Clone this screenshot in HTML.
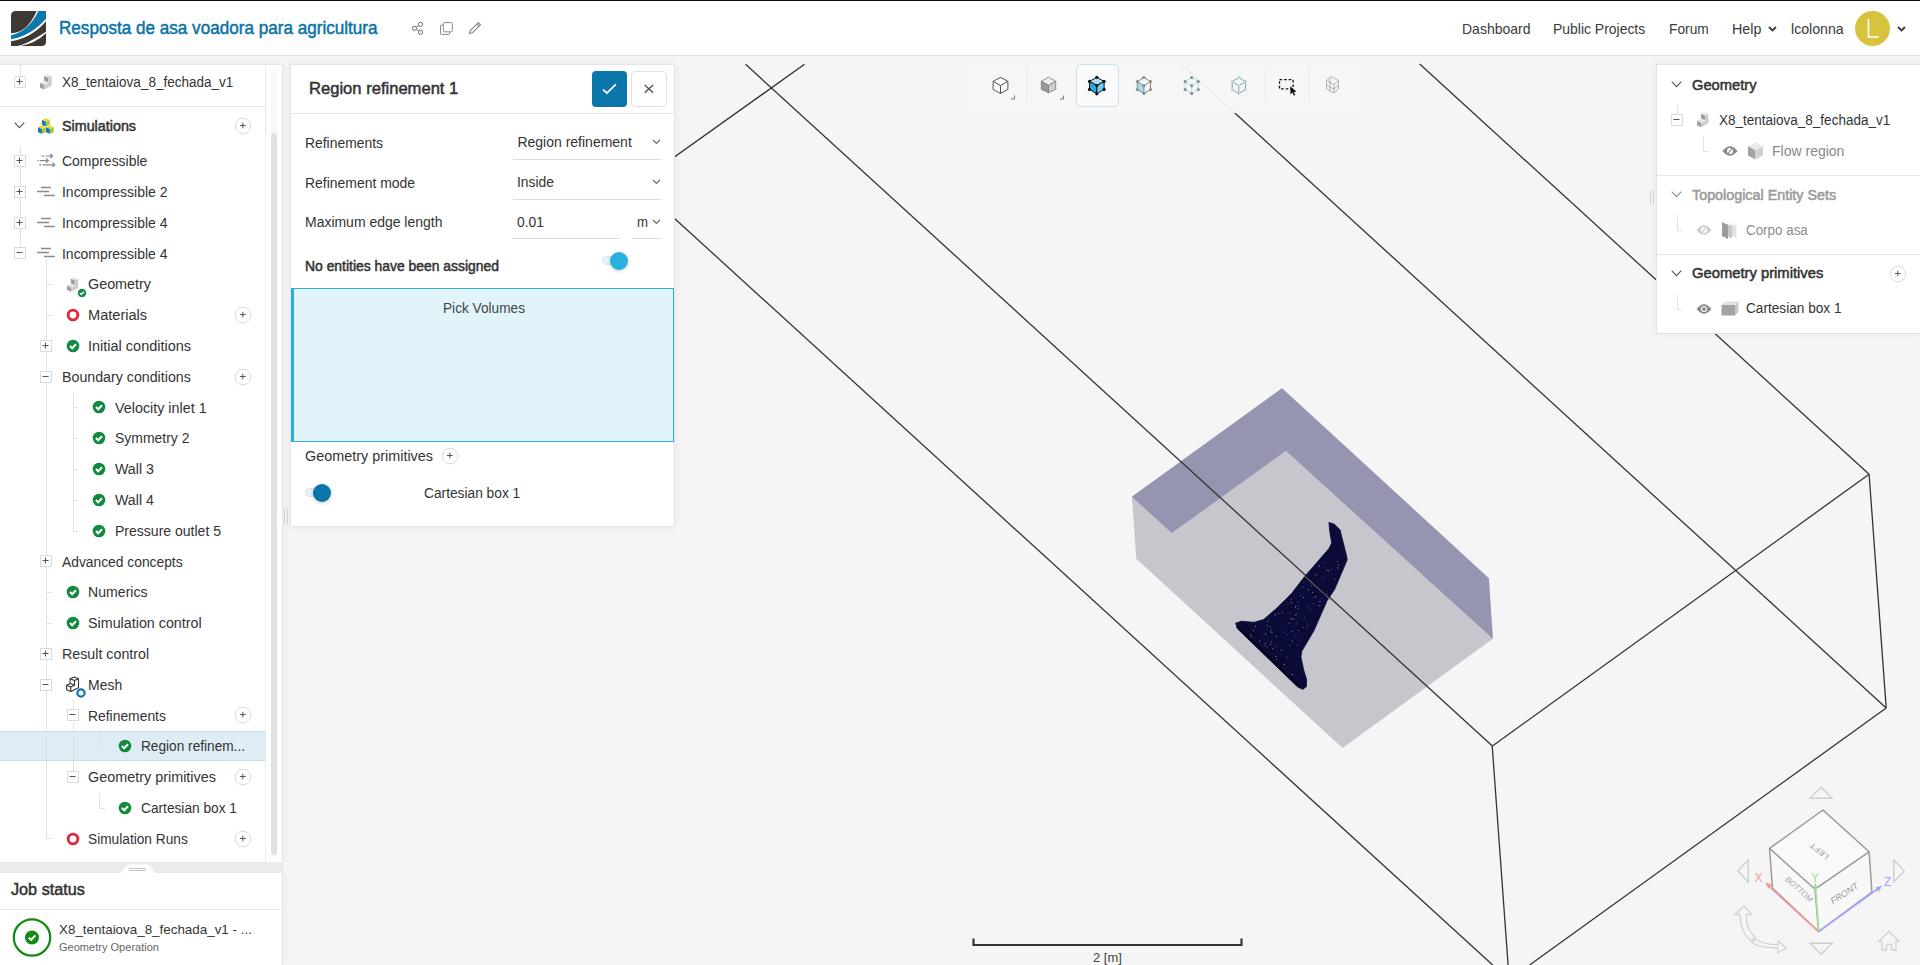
<!DOCTYPE html><html><head><meta charset="utf-8"><style>
html,body{margin:0;padding:0;width:1920px;height:965px;overflow:hidden;background:#f5f5f5;font-family:"Liberation Sans",sans-serif;}
.t{position:absolute;line-height:1;white-space:nowrap;}
svg{position:absolute;overflow:visible;}
</style></head><body>
<div style="position:absolute;left:0px;top:0px;width:1920px;height:1px;background:#0d0d0d"></div>
<div style="position:absolute;left:0px;top:1px;width:1920px;height:54px;background:linear-gradient(#fff 0,#fff 70%,#fcfcfc 100%)"></div>
<div style="position:absolute;left:0px;top:55px;width:1920px;height:1px;background:#e2e2e2"></div>
<svg style="left:11px;top:11px;" width="35" height="35" viewBox="0 0 35 35"><defs><clipPath id="lc"><path d="M5 0H35V30.5Q35 35 30.5 35H0V5Q0 0 5 0Z"/></clipPath></defs>
<g clip-path="url(#lc)"><rect width="35" height="35" fill="#3e3935"/>
<path fill="#fff" d="M25.7 0H35V10.2Q21 26.8 0 30.2V22.2Q15.85 22.4 25.7 0Z"/>
<path fill="#0a78ad" d="M27.4 0H35V7.83Q19.9 24.9 0 28.3V24.15Q17.3 20.9 27.4 0Z"/>
<path fill="#fff" d="M35 20.67Q16 33.2 6 35H9.6Q24 32.6 35 22.3Z"/></g></svg>
<div class="t" style="left:59.0px;top:17.72px;font-size:19px;color:#0a73a6;font-weight:normal;transform:scaleX(0.9002);transform-origin:0 0;-webkit-text-stroke:0.5px #0a73a6;">Resposta de asa voadora para agricultura</div>
<svg style="left:410px;top:20px;" width="16" height="16" viewBox="0 0 16 16"><g fill="none" stroke="#6a6a6a" stroke-width="1"><circle cx="4.5" cy="8.3" r="2.1"/><circle cx="10.5" cy="4.4" r="2.1"/><circle cx="10.5" cy="12.3" r="2.1"/><path d="M6.3 7.2L8.7 5.5M6.3 9.4L8.7 11.2"/></g></svg>
<svg style="left:438px;top:20px;" width="16" height="16" viewBox="0 0 16 16"><g fill="none" stroke="#8a8a8a" stroke-width="1"><path d="M5 5H3.3Q2.5 5 2.5 5.8V13.6Q2.5 14.4 3.3 14.4H10.8Q11.6 14.4 11.6 13.6V12"/><rect x="5.3" y="2.6" width="9" height="9.2" rx="0.9" fill="#fff" stroke="#8a8a8a"/></g></svg>
<svg style="left:467px;top:20px;" width="16" height="16" viewBox="0 0 16 16"><g fill="none" stroke="#8a8a8a" stroke-width="1.1"><path d="M2.5 13.5L3.3 10.5L11.3 2.5L13.5 4.7L5.5 12.7Z M10 4L12 6"/></g></svg>
<div class="t" style="left:1462.2px;top:21.71px;font-size:14.4px;color:#3a3a3a;font-weight:normal;transform:scaleX(0.9730);transform-origin:0 0;">Dashboard</div>
<div class="t" style="left:1553.3px;top:21.71px;font-size:14.4px;color:#3a3a3a;font-weight:normal;transform:scaleX(0.9687);transform-origin:0 0;">Public Projects</div>
<div class="t" style="left:1668.7px;top:21.71px;font-size:14.4px;color:#3a3a3a;font-weight:normal;transform:scaleX(0.9573);transform-origin:0 0;">Forum</div>
<div class="t" style="left:1731.7px;top:21.71px;font-size:14.4px;color:#3a3a3a;font-weight:normal;transform:scaleX(0.9934);transform-origin:0 0;">Help</div>
<svg style="left:1766.5px;top:24.5px;" width="11" height="8" viewBox="0 0 11 8"><path d="M2 2L5.5 5.5L9 2" stroke="#3a3a3a" stroke-width="1.8" fill="none"/></svg>
<div class="t" style="left:1791.0px;top:21.71px;font-size:14.4px;color:#3a3a3a;font-weight:normal;transform:scaleX(0.9831);transform-origin:0 0;">lcolonna</div>
<div style="position:absolute;left:1855px;top:11px;width:35px;height:35px;background:#d8c33f;border-radius:50%"></div>
<svg style="left:1855px;top:11px;" width="35" height="35" viewBox="0 0 35 35"><path d="M13.5 8V26H23.5" stroke="#fff" stroke-width="1.6" fill="none"/></svg>
<svg style="left:1896px;top:24.5px;" width="11" height="8" viewBox="0 0 11 8"><path d="M2 2L5.5 5.5L9 2" stroke="#3a3a3a" stroke-width="1.8" fill="none"/></svg>
<svg style="left:0;top:0" width="1920" height="965" viewBox="0 0 1920 965"><polygon points="1282,388.2 1488.8,578.2 1492.9,638.8 1342.5,747.9 1136.3,558.8 1131.9,496.8" fill="#c7c6cd"/><polygon points="1282,388.2 1488.8,578.2 1492.9,638.8 1285.9,450.8 1171.7,533.1 1131.9,496.8" fill="#9595b1"/><line x1="745.6" y1="64.3" x2="1492.4" y2="746" stroke="#333" stroke-width="1.3"/><line x1="804.5" y1="64.3" x2="560" y2="238.5" stroke="#333" stroke-width="1.3"/><line x1="674" y1="217.9" x2="1492.7" y2="965" stroke="#333" stroke-width="1.3"/><line x1="1235.4" y1="113.4" x2="1886.2" y2="708" stroke="#333" stroke-width="1.3"/><line x1="1419.7" y1="64" x2="1869.1" y2="474.2" stroke="#333" stroke-width="1.3"/><line x1="1492.4" y1="746" x2="1869.1" y2="474.2" stroke="#333" stroke-width="1.3"/><line x1="1869.1" y1="474.2" x2="1886.2" y2="708" stroke="#333" stroke-width="1.3"/><line x1="1886.2" y1="708" x2="1529.6" y2="965" stroke="#333" stroke-width="1.3"/><line x1="1492.2" y1="745.8" x2="1508.1" y2="965" stroke="#333" stroke-width="1.3"/><line x1="1181" y1="64" x2="1235.4" y2="113.4" stroke="#333" stroke-width="1.3"/><polygon points="1328.9,522.5 1334.5,524.3 1340.1,529.9 1341.9,537.4 1346.6,556 1347.2,559.8 1334.5,589.6 1327,600.8 1313.9,630.7 1301.8,651.2 1300.9,656.8 1303.7,669.9 1306.5,679.2 1306.5,686.6 1302.8,689.4 1297.2,686.6 1237.5,628.8 1235.6,623.2 1241.2,621.3 1254.3,622.3 1263.6,619.5 1276.6,608.3 1291.6,593.4 1304.6,576.6 1317.7,561.6 1328.9,548.6 1331.7,543 1329.8,531.8" fill="#0b0b38" stroke="#0b0b38" stroke-width="0.8" stroke-linejoin="round"/><circle cx="1287.5" cy="657.3" r="0.55" fill="#d8d8ee" opacity="0.46"/><circle cx="1267.3" cy="625.4" r="0.55" fill="#d8d8ee" opacity="0.54"/><circle cx="1303.2" cy="627.2" r="0.55" fill="#d8d8ee" opacity="0.63"/><circle cx="1282.2" cy="612.6" r="0.55" fill="#d8d8ee" opacity="0.65"/><circle cx="1265.6" cy="633.9" r="0.55" fill="#d8d8ee" opacity="0.69"/><circle cx="1303.6" cy="597.5" r="0.55" fill="#d8d8ee" opacity="0.73"/><circle cx="1276.4" cy="636.2" r="0.55" fill="#d8d8ee" opacity="0.65"/><circle cx="1304.4" cy="617.8" r="0.55" fill="#d8d8ee" opacity="0.40"/><circle cx="1292.4" cy="631.3" r="0.55" fill="#d8d8ee" opacity="0.73"/><circle cx="1251.1" cy="637.2" r="0.55" fill="#d8d8ee" opacity="0.48"/><circle cx="1327.2" cy="570.5" r="0.55" fill="#d8d8ee" opacity="0.61"/><circle cx="1283.6" cy="632.0" r="0.55" fill="#d8d8ee" opacity="0.52"/><circle cx="1284.1" cy="664.4" r="0.55" fill="#d8d8ee" opacity="0.68"/><circle cx="1289.9" cy="612.9" r="0.55" fill="#d8d8ee" opacity="0.44"/><circle cx="1331.4" cy="569.5" r="0.55" fill="#d8d8ee" opacity="0.46"/><circle cx="1293.5" cy="619.3" r="0.55" fill="#d8d8ee" opacity="0.46"/><circle cx="1296.5" cy="623.8" r="0.55" fill="#d8d8ee" opacity="0.42"/><circle cx="1255.4" cy="626.5" r="0.55" fill="#d8d8ee" opacity="0.75"/><circle cx="1291.6" cy="602.4" r="0.55" fill="#d8d8ee" opacity="0.61"/><circle cx="1322.9" cy="577.7" r="0.55" fill="#d8d8ee" opacity="0.50"/><circle cx="1253.5" cy="630.7" r="0.55" fill="#d8d8ee" opacity="0.53"/><circle cx="1320.0" cy="601.5" r="0.55" fill="#d8d8ee" opacity="0.80"/><circle cx="1310.7" cy="581.1" r="0.55" fill="#d8d8ee" opacity="0.58"/><circle cx="1310.0" cy="609.3" r="0.55" fill="#d8d8ee" opacity="0.45"/><circle cx="1290.8" cy="618.3" r="0.55" fill="#d8d8ee" opacity="0.71"/><circle cx="1298.2" cy="608.8" r="0.55" fill="#d8d8ee" opacity="0.64"/><circle cx="1292.3" cy="641.0" r="0.55" fill="#d8d8ee" opacity="0.80"/><circle cx="1296.8" cy="613.9" r="0.55" fill="#d8d8ee" opacity="0.40"/><circle cx="1272.7" cy="648.6" r="0.55" fill="#d8d8ee" opacity="0.56"/><circle cx="1295.8" cy="614.9" r="0.55" fill="#d8d8ee" opacity="0.72"/><circle cx="1289.3" cy="623.0" r="0.55" fill="#d8d8ee" opacity="0.73"/><circle cx="1295.6" cy="606.9" r="0.55" fill="#d8d8ee" opacity="0.76"/><circle cx="1314.3" cy="597.4" r="0.55" fill="#d8d8ee" opacity="0.37"/><circle cx="1298.3" cy="601.5" r="0.55" fill="#d8d8ee" opacity="0.48"/><circle cx="1300.4" cy="595.5" r="0.55" fill="#d8d8ee" opacity="0.40"/><circle cx="1307.4" cy="607.0" r="0.55" fill="#d8d8ee" opacity="0.44"/><circle cx="1250.8" cy="635.1" r="0.55" fill="#d8d8ee" opacity="0.79"/><circle cx="1278.9" cy="613.5" r="0.55" fill="#d8d8ee" opacity="0.61"/><circle cx="1337.7" cy="567.9" r="0.55" fill="#d8d8ee" opacity="0.77"/><circle cx="1275.5" cy="646.5" r="0.55" fill="#d8d8ee" opacity="0.52"/><circle cx="1292.5" cy="674.5" r="0.55" fill="#d8d8ee" opacity="0.74"/><circle cx="1326.9" cy="594.1" r="0.55" fill="#d8d8ee" opacity="0.55"/><circle cx="1295.7" cy="635.0" r="0.55" fill="#d8d8ee" opacity="0.47"/><circle cx="1308.6" cy="589.8" r="0.55" fill="#d8d8ee" opacity="0.70"/><circle cx="1319.1" cy="565.9" r="0.55" fill="#d8d8ee" opacity="0.78"/><circle cx="1268.3" cy="618.7" r="0.55" fill="#d8d8ee" opacity="0.40"/><circle cx="1297.9" cy="645.1" r="0.55" fill="#d8d8ee" opacity="0.62"/><circle cx="1259.9" cy="640.9" r="0.55" fill="#d8d8ee" opacity="0.63"/><circle cx="1297.4" cy="605.7" r="0.55" fill="#d8d8ee" opacity="0.45"/><circle cx="1307.8" cy="625.2" r="0.55" fill="#d8d8ee" opacity="0.52"/><circle cx="1313.1" cy="603.3" r="0.55" fill="#d8d8ee" opacity="0.41"/><circle cx="1319.8" cy="605.5" r="0.55" fill="#d8d8ee" opacity="0.44"/><circle cx="1298.5" cy="630.5" r="0.55" fill="#d8d8ee" opacity="0.46"/><circle cx="1271.6" cy="641.7" r="0.55" fill="#d8d8ee" opacity="0.62"/><circle cx="1265.5" cy="643.4" r="0.55" fill="#d8d8ee" opacity="0.64"/><circle cx="1306.7" cy="627.8" r="0.55" fill="#d8d8ee" opacity="0.44"/><circle cx="1270.4" cy="643.9" r="0.55" fill="#d8d8ee" opacity="0.36"/><circle cx="1275.4" cy="615.8" r="0.55" fill="#d8d8ee" opacity="0.50"/><circle cx="1271.9" cy="632.5" r="0.55" fill="#d8d8ee" opacity="0.66"/><circle cx="1291.5" cy="599.6" r="0.55" fill="#d8d8ee" opacity="0.43"/><circle cx="1276.6" cy="659.4" r="0.55" fill="#d8d8ee" opacity="0.49"/><circle cx="1303.9" cy="582.7" r="0.55" fill="#d8d8ee" opacity="0.44"/><circle cx="1328.5" cy="570.7" r="0.55" fill="#d8d8ee" opacity="0.71"/><circle cx="1338.6" cy="564.9" r="0.55" fill="#d8d8ee" opacity="0.60"/><circle cx="1299.9" cy="640.1" r="0.55" fill="#d8d8ee" opacity="0.38"/><circle cx="1290.1" cy="645.4" r="0.55" fill="#d8d8ee" opacity="0.40"/><circle cx="1271.0" cy="630.0" r="0.55" fill="#d8d8ee" opacity="0.53"/><circle cx="1275.1" cy="614.2" r="0.55" fill="#d8d8ee" opacity="0.60"/><circle cx="1292.3" cy="618.9" r="0.55" fill="#d8d8ee" opacity="0.64"/><circle cx="1321.5" cy="598.2" r="0.55" fill="#d8d8ee" opacity="0.39"/><circle cx="1323.2" cy="562.2" r="0.55" fill="#d8d8ee" opacity="0.42"/><circle cx="1270.2" cy="626.8" r="0.55" fill="#d8d8ee" opacity="0.66"/><circle cx="1303.3" cy="587.1" r="0.55" fill="#d8d8ee" opacity="0.53"/><circle cx="1267.4" cy="621.2" r="0.55" fill="#d8d8ee" opacity="0.48"/><circle cx="1315.5" cy="574.2" r="0.55" fill="#d8d8ee" opacity="0.49"/><circle cx="1312.4" cy="592.2" r="0.55" fill="#d8d8ee" opacity="0.78"/><circle cx="1270.7" cy="631.8" r="0.55" fill="#d8d8ee" opacity="0.49"/><circle cx="1337.5" cy="561.3" r="0.55" fill="#d8d8ee" opacity="0.60"/><circle cx="1287.1" cy="634.2" r="0.55" fill="#d8d8ee" opacity="0.51"/><circle cx="1318.9" cy="605.8" r="0.55" fill="#d8d8ee" opacity="0.54"/><circle cx="1276.2" cy="656.2" r="0.55" fill="#d8d8ee" opacity="0.74"/><circle cx="1267.1" cy="646.7" r="0.55" fill="#d8d8ee" opacity="0.80"/><circle cx="1311.4" cy="585.6" r="0.55" fill="#d8d8ee" opacity="0.51"/><circle cx="1270.7" cy="644.6" r="0.55" fill="#d8d8ee" opacity="0.44"/><circle cx="1334.9" cy="579.3" r="0.55" fill="#d8d8ee" opacity="0.68"/><circle cx="1316.7" cy="575.6" r="0.55" fill="#d8d8ee" opacity="0.44"/><circle cx="1288.0" cy="604.0" r="0.55" fill="#d8d8ee" opacity="0.35"/><circle cx="1281.2" cy="650.2" r="0.55" fill="#d8d8ee" opacity="0.76"/><circle cx="1264.7" cy="645.5" r="0.55" fill="#d8d8ee" opacity="0.54"/><circle cx="1316.0" cy="596.5" r="0.55" fill="#d8d8ee" opacity="0.72"/><path d="M1237 626.5L1300 687" stroke="#000010" stroke-width="2" opacity="0.85"/><path d="M1243 623.5L1304 680" stroke="#000010" stroke-width="1" opacity="0.6"/><line x1="1304" y1="575.6" x2="1331" y2="600.2" stroke="#8a8a70" stroke-width="1.1" opacity="0.7"/></svg>
<div style="position:absolute;left:0px;top:64px;width:283px;height:798px;background:#fff;border-top:1px solid #e6e6e6;border-right:1px solid #e4e4e4;box-sizing:border-box;box-shadow:0 0 9px rgba(0,0,0,0.06)"></div>
<div style="position:absolute;left:265px;top:65px;width:1px;height:797px;background:#e8ecef"></div>
<div style="position:absolute;left:271px;top:70px;width:6px;height:787px;background:#f7f8f9;border-radius:3px"></div>
<div style="position:absolute;left:271px;top:133px;width:6px;height:722px;background:#dde1e5;border-radius:3px"></div>
<div style="position:absolute;left:20px;top:65px;width:1px;height:11px;background:#e2e2e2"></div>
<svg style="left:14px;top:76px;" width="12" height="12" viewBox="0 0 12 12"><rect x="0.5" y="0.5" width="11" height="11" fill="#fff" stroke="#dadada"/><path d="M2.5 5.5H8.5" stroke="#555" stroke-width="1"/><path d="M5.5 2.5V8.5" stroke="#555" stroke-width="1"/></svg>
<svg style="left:40px;top:74px;transform:scale(1.0);transform-origin:0 0;" width="13" height="16" viewBox="0 0 13 16"><polygon points="4.1,1.9 7.6,0.3 11.75,2.1 8.2,3.8" fill="#e6e6e6"/>
<polygon points="4.1,1.9 8.2,3.8 8.2,8.6 4.1,6.7" fill="#9c9c9c"/>
<polygon points="8.2,3.8 11.75,2.1 11.75,11.5 4.3,15.6 4.3,11 8.2,9.2" fill="#cdcdcd"/>
<polygon points="0,9 3.5,7.4 8.2,9.2 4.3,11" fill="#e3e3e3"/>
<polygon points="0,9 4.3,11 4.3,15.6 0,13.75" fill="#a0a0a0"/></svg>
<div class="t" style="left:62.0px;top:75.05px;font-size:14px;color:#333;font-weight:normal;transform:scaleX(0.9652);transform-origin:0 0;">X8_tentaiova_8_fechada_v1</div>
<div style="position:absolute;left:0px;top:106px;width:265px;height:1px;background:#e8e8e8"></div>
<svg style="left:14px;top:122px;" width="11" height="7" viewBox="0 0 11 7"><path d="M0.7 0.7L5.5 5.6L10.3 0.7" stroke="#555" stroke-width="1.1" fill="none"/></svg>
<svg style="left:37px;top:117px;" width="18" height="18" viewBox="0 0 18 18"><polygon points="8.8,1.0 12.7,3.0 8.9,4.8 5.0,3.0" fill="#e6dc2e"/><polygon points="5.0,3.0 8.9,4.8 8.9,9.6 5.0,8.0" fill="#1277b8"/><polygon points="8.9,4.8 12.7,3.0 12.7,8.0 8.9,9.6" fill="#a8c43a"/><polygon points="4.8,8.2 8.7,10.2 4.9,12.0 1.0,10.2" fill="#e6dc2e"/><polygon points="1.0,10.2 4.9,12.0 4.9,16.8 1.0,15.2" fill="#1277b8"/><polygon points="4.9,12.0 8.7,10.2 8.7,15.2 4.9,16.8" fill="#a8c43a"/><polygon points="12.8,8.2 16.7,10.2 12.9,12.0 9.0,10.2" fill="#e6dc2e"/><polygon points="9.0,10.2 12.9,12.0 12.9,16.8 9.0,15.2" fill="#1277b8"/><polygon points="12.9,12.0 16.7,10.2 16.7,15.2 12.9,16.8" fill="#a8c43a"/></svg>
<div class="t" style="left:62.0px;top:119.05px;font-size:14px;color:#333;font-weight:normal;transform:scaleX(1.0226);transform-origin:0 0;-webkit-text-stroke:0.5px #333;">Simulations</div>
<svg style="left:234px;top:117px;" width="18" height="18" viewBox="0 0 18 18"><circle cx="9" cy="9" r="7.8" fill="#fff" stroke="#d5dbe1"/><path d="M6 8.5H11.6M8.8 5.7V11.3" stroke="#555" stroke-width="1"/></svg>
<div style="position:absolute;left:20px;top:146px;width:1px;height:107px;background:#e2e2e2"></div>
<div style="position:absolute;left:0px;top:731px;width:265px;height:30px;background:#deedf5;border-top:1px solid #c6dfeb;border-bottom:1px solid #c6dfeb;box-sizing:border-box"></div>
<div class="t" style="left:62.0px;top:154.25px;font-size:14px;color:#333;font-weight:normal;transform:scaleX(0.9967);transform-origin:0 0;">Compressible</div>
<div class="t" style="left:62.0px;top:185.05px;font-size:14px;color:#333;font-weight:normal;transform:scaleX(0.9960);transform-origin:0 0;">Incompressible 2</div>
<div class="t" style="left:62.0px;top:215.85px;font-size:14px;color:#333;font-weight:normal;transform:scaleX(0.9960);transform-origin:0 0;">Incompressible 4</div>
<div class="t" style="left:62.0px;top:246.65px;font-size:14px;color:#333;font-weight:normal;transform:scaleX(0.9960);transform-origin:0 0;">Incompressible 4</div>
<div class="t" style="left:88.2px;top:277.45px;font-size:14px;color:#333;font-weight:normal;transform:scaleX(1.0250);transform-origin:0 0;">Geometry</div>
<div class="t" style="left:88.2px;top:308.25px;font-size:14px;color:#333;font-weight:normal;transform:scaleX(1.0406);transform-origin:0 0;">Materials</div>
<div class="t" style="left:88.2px;top:339.05px;font-size:14px;color:#333;font-weight:normal;transform:scaleX(1.0350);transform-origin:0 0;">Initial conditions</div>
<div class="t" style="left:62.0px;top:369.85px;font-size:14px;color:#333;font-weight:normal;transform:scaleX(1.0153);transform-origin:0 0;">Boundary conditions</div>
<div class="t" style="left:114.8px;top:400.65px;font-size:14px;color:#333;font-weight:normal;transform:scaleX(1.0235);transform-origin:0 0;">Velocity inlet 1</div>
<div class="t" style="left:114.8px;top:431.45px;font-size:14px;color:#333;font-weight:normal;transform:scaleX(0.9963);transform-origin:0 0;">Symmetry 2</div>
<div class="t" style="left:114.8px;top:462.25px;font-size:14px;color:#333;font-weight:normal;transform:scaleX(1.0136);transform-origin:0 0;">Wall 3</div>
<div class="t" style="left:114.8px;top:493.05px;font-size:14px;color:#333;font-weight:normal;transform:scaleX(1.0136);transform-origin:0 0;">Wall 4</div>
<div class="t" style="left:114.8px;top:523.85px;font-size:14px;color:#333;font-weight:normal;transform:scaleX(1.0016);transform-origin:0 0;">Pressure outlet 5</div>
<div class="t" style="left:62.0px;top:554.65px;font-size:14px;color:#333;font-weight:normal;transform:scaleX(0.9870);transform-origin:0 0;">Advanced concepts</div>
<div class="t" style="left:88.2px;top:585.45px;font-size:14px;color:#333;font-weight:normal;transform:scaleX(1.0082);transform-origin:0 0;">Numerics</div>
<div class="t" style="left:88.2px;top:616.25px;font-size:14px;color:#333;font-weight:normal;transform:scaleX(1.0218);transform-origin:0 0;">Simulation control</div>
<div class="t" style="left:62.0px;top:647.05px;font-size:14px;color:#333;font-weight:normal;transform:scaleX(1.0176);transform-origin:0 0;">Result control</div>
<div class="t" style="left:88.2px;top:677.85px;font-size:14px;color:#333;font-weight:normal;transform:scaleX(0.9990);transform-origin:0 0;">Mesh</div>
<div class="t" style="left:88.4px;top:708.65px;font-size:14px;color:#333;font-weight:normal;transform:scaleX(0.9912);transform-origin:0 0;">Refinements</div>
<div class="t" style="left:141.4px;top:739.45px;font-size:14px;color:#333;font-weight:normal;transform:scaleX(0.9756);transform-origin:0 0;">Region refinem...</div>
<div class="t" style="left:88.4px;top:770.25px;font-size:14px;color:#333;font-weight:normal;transform:scaleX(1.0276);transform-origin:0 0;">Geometry primitives</div>
<div class="t" style="left:141.4px;top:801.05px;font-size:14px;color:#333;font-weight:normal;transform:scaleX(0.9790);transform-origin:0 0;">Cartesian box 1</div>
<div class="t" style="left:88.4px;top:831.85px;font-size:14px;color:#333;font-weight:normal;transform:scaleX(0.9790);transform-origin:0 0;">Simulation Runs</div>
<svg style="left:14px;top:155px;" width="12" height="12" viewBox="0 0 12 12"><rect x="0.5" y="0.5" width="11" height="11" fill="#fff" stroke="#dadada"/><path d="M2.5 5.5H8.5" stroke="#555" stroke-width="1"/><path d="M5.5 2.5V8.5" stroke="#555" stroke-width="1"/></svg>
<svg style="left:14px;top:186px;" width="12" height="12" viewBox="0 0 12 12"><rect x="0.5" y="0.5" width="11" height="11" fill="#fff" stroke="#dadada"/><path d="M2.5 5.5H8.5" stroke="#555" stroke-width="1"/><path d="M5.5 2.5V8.5" stroke="#555" stroke-width="1"/></svg>
<svg style="left:14px;top:217px;" width="12" height="12" viewBox="0 0 12 12"><rect x="0.5" y="0.5" width="11" height="11" fill="#fff" stroke="#dadada"/><path d="M2.5 5.5H8.5" stroke="#555" stroke-width="1"/><path d="M5.5 2.5V8.5" stroke="#555" stroke-width="1"/></svg>
<svg style="left:14px;top:247px;" width="12" height="12" viewBox="0 0 12 12"><rect x="0.5" y="0.5" width="11" height="11" fill="#fff" stroke="#dadada"/><path d="M2.5 5.5H8.5" stroke="#555" stroke-width="1"/></svg>
<svg style="left:37px;top:153px;" width="18" height="16" viewBox="0 0 18 16"><g stroke="#8a8a8a" stroke-width="1.2" fill="none"><path d="M4.5 3H7.5M8.8 3H15M13.2 1L15.6 3L13.2 5"/><path d="M0.2 7.6H1.6M2.8 7.6H10.8M9 5.4L11.3 7.6L9 9.8"/><path d="M2.2 11.8H4.2M5.6 11.8H17.5M15.4 9.6L17.8 11.8L15.4 14"/></g></svg>
<svg style="left:37px;top:184px;" width="18" height="16" viewBox="0 0 18 16"><g stroke="#8a8a8a" stroke-width="1.3" fill="none"><path d="M4 3.5H14M0 7.5H12M7 11.5H17.8"/></g></svg>
<svg style="left:37px;top:215px;" width="18" height="16" viewBox="0 0 18 16"><g stroke="#8a8a8a" stroke-width="1.3" fill="none"><path d="M4 3.5H14M0 7.5H12M7 11.5H17.8"/></g></svg>
<svg style="left:37px;top:245px;" width="18" height="16" viewBox="0 0 18 16"><g stroke="#8a8a8a" stroke-width="1.3" fill="none"><path d="M4 3.5H14M0 7.5H12M7 11.5H17.8"/></g></svg>
<div style="position:absolute;left:46px;top:259px;width:1px;height:580px;background:#e2e2e2"></div>
<div style="position:absolute;left:46px;top:284px;width:6px;height:1px;background:#e2e2e2"></div>
<div style="position:absolute;left:46px;top:315px;width:6px;height:1px;background:#e2e2e2"></div>
<div style="position:absolute;left:46px;top:592px;width:6px;height:1px;background:#e2e2e2"></div>
<div style="position:absolute;left:46px;top:623px;width:6px;height:1px;background:#e2e2e2"></div>
<div style="position:absolute;left:46px;top:838px;width:6px;height:1px;background:#e2e2e2"></div>
<svg style="left:66.5px;top:276.5px;transform:scale(0.95);transform-origin:0 0;" width="13" height="16" viewBox="0 0 13 16"><polygon points="4.1,1.9 7.6,0.3 11.75,2.1 8.2,3.8" fill="#e6e6e6"/>
<polygon points="4.1,1.9 8.2,3.8 8.2,8.6 4.1,6.7" fill="#9c9c9c"/>
<polygon points="8.2,3.8 11.75,2.1 11.75,11.5 4.3,15.6 4.3,11 8.2,9.2" fill="#cdcdcd"/>
<polygon points="0,9 3.5,7.4 8.2,9.2 4.3,11" fill="#e3e3e3"/>
<polygon points="0,9 4.3,11 4.3,15.6 0,13.75" fill="#a0a0a0"/></svg>
<svg style="left:76.5px;top:287.5px;" width="10" height="10" viewBox="0 0 10 10"><circle cx="5" cy="5" r="4.6" fill="#128a3e" stroke="#fff" stroke-width="0.8"/><path d="M2.9 5.1L4.4 6.5L7.1 3.7" stroke="#fff" stroke-width="1.4" fill="none"/></svg>
<svg style="left:66px;top:308.0px;" width="14" height="14" viewBox="0 0 14 14"><circle cx="7" cy="7" r="4.85" fill="none" stroke="#e1283a" stroke-width="2.9"/></svg>
<svg style="left:234px;top:306px;" width="18" height="18" viewBox="0 0 18 18"><circle cx="9" cy="9" r="7.8" fill="#fff" stroke="#d5dbe1"/><path d="M6 8.5H11.6M8.8 5.7V11.3" stroke="#555" stroke-width="1"/></svg>
<svg style="left:40px;top:340px;" width="12" height="12" viewBox="0 0 12 12"><rect x="0.5" y="0.5" width="11" height="11" fill="#fff" stroke="#dadada"/><path d="M2.5 5.5H8.5" stroke="#555" stroke-width="1"/><path d="M5.5 2.5V8.5" stroke="#555" stroke-width="1"/></svg>
<svg style="left:66px;top:338.8px;" width="14" height="14" viewBox="0 0 14 14"><circle cx="7" cy="7" r="6.3" fill="#128a3e"/><path d="M4 7L6.2 9.2L10 5.2" stroke="#fff" stroke-width="2.1" fill="none"/></svg>
<svg style="left:40px;top:371px;" width="12" height="12" viewBox="0 0 12 12"><rect x="0.5" y="0.5" width="11" height="11" fill="#fff" stroke="#dadada"/><path d="M2.5 5.5H8.5" stroke="#555" stroke-width="1"/></svg>
<svg style="left:234px;top:368px;" width="18" height="18" viewBox="0 0 18 18"><circle cx="9" cy="9" r="7.8" fill="#fff" stroke="#d5dbe1"/><path d="M6 8.5H11.6M8.8 5.7V11.3" stroke="#555" stroke-width="1"/></svg>
<div style="position:absolute;left:73px;top:393px;width:1px;height:138px;background:#e2e2e2"></div>
<svg style="left:92px;top:400.4px;" width="14" height="14" viewBox="0 0 14 14"><circle cx="7" cy="7" r="6.3" fill="#128a3e"/><path d="M4 7L6.2 9.2L10 5.2" stroke="#fff" stroke-width="2.1" fill="none"/></svg>
<div style="position:absolute;left:73px;top:407px;width:5px;height:1px;background:#e2e2e2"></div>
<svg style="left:92px;top:431.2px;" width="14" height="14" viewBox="0 0 14 14"><circle cx="7" cy="7" r="6.3" fill="#128a3e"/><path d="M4 7L6.2 9.2L10 5.2" stroke="#fff" stroke-width="2.1" fill="none"/></svg>
<div style="position:absolute;left:73px;top:438px;width:5px;height:1px;background:#e2e2e2"></div>
<svg style="left:92px;top:462.0px;" width="14" height="14" viewBox="0 0 14 14"><circle cx="7" cy="7" r="6.3" fill="#128a3e"/><path d="M4 7L6.2 9.2L10 5.2" stroke="#fff" stroke-width="2.1" fill="none"/></svg>
<div style="position:absolute;left:73px;top:469px;width:5px;height:1px;background:#e2e2e2"></div>
<svg style="left:92px;top:492.8px;" width="14" height="14" viewBox="0 0 14 14"><circle cx="7" cy="7" r="6.3" fill="#128a3e"/><path d="M4 7L6.2 9.2L10 5.2" stroke="#fff" stroke-width="2.1" fill="none"/></svg>
<div style="position:absolute;left:73px;top:500px;width:5px;height:1px;background:#e2e2e2"></div>
<svg style="left:92px;top:523.6px;" width="14" height="14" viewBox="0 0 14 14"><circle cx="7" cy="7" r="6.3" fill="#128a3e"/><path d="M4 7L6.2 9.2L10 5.2" stroke="#fff" stroke-width="2.1" fill="none"/></svg>
<div style="position:absolute;left:73px;top:531px;width:5px;height:1px;background:#e2e2e2"></div>
<svg style="left:40px;top:555px;" width="12" height="12" viewBox="0 0 12 12"><rect x="0.5" y="0.5" width="11" height="11" fill="#fff" stroke="#dadada"/><path d="M2.5 5.5H8.5" stroke="#555" stroke-width="1"/><path d="M5.5 2.5V8.5" stroke="#555" stroke-width="1"/></svg>
<svg style="left:66px;top:585.2px;" width="14" height="14" viewBox="0 0 14 14"><circle cx="7" cy="7" r="6.3" fill="#128a3e"/><path d="M4 7L6.2 9.2L10 5.2" stroke="#fff" stroke-width="2.1" fill="none"/></svg>
<svg style="left:66px;top:616.0px;" width="14" height="14" viewBox="0 0 14 14"><circle cx="7" cy="7" r="6.3" fill="#128a3e"/><path d="M4 7L6.2 9.2L10 5.2" stroke="#fff" stroke-width="2.1" fill="none"/></svg>
<svg style="left:40px;top:648px;" width="12" height="12" viewBox="0 0 12 12"><rect x="0.5" y="0.5" width="11" height="11" fill="#fff" stroke="#dadada"/><path d="M2.5 5.5H8.5" stroke="#555" stroke-width="1"/><path d="M5.5 2.5V8.5" stroke="#555" stroke-width="1"/></svg>
<svg style="left:40px;top:679px;" width="12" height="12" viewBox="0 0 12 12"><rect x="0.5" y="0.5" width="11" height="11" fill="#fff" stroke="#dadada"/><path d="M2.5 5.5H8.5" stroke="#555" stroke-width="1"/></svg>
<svg style="left:66px;top:676px;" width="14" height="16" viewBox="0 0 14 16"><g stroke="#333" stroke-width="1.1" fill="none" stroke-linejoin="round"><path d="M4.1 2.7L8.5 0.9L12.5 2.7L8.5 4.4Z"/><path d="M4.1 2.7V7.6M8.5 4.4V9.3M12.5 2.7V11.7L4.7 15.4"/><path d="M0.6 9.3L4.7 7.6L8.5 9.3L4.7 11.1Z"/><path d="M0.6 9.3V13.7L4.7 15.4V11.1"/></g></svg>
<svg style="left:76.2px;top:688.3px;" width="10" height="10" viewBox="0 0 10 10"><circle cx="5" cy="5" r="3.6" fill="#fff" stroke="#0a76b4" stroke-width="2.2"/></svg>
<div style="position:absolute;left:73px;top:700px;width:1px;height:9px;background:#e2e2e2"></div>
<svg style="left:67px;top:709px;" width="12" height="12" viewBox="0 0 12 12"><rect x="0.5" y="0.5" width="11" height="11" fill="#fff" stroke="#dadada"/><path d="M2.5 5.5H8.5" stroke="#555" stroke-width="1"/></svg>
<svg style="left:234px;top:706px;" width="18" height="18" viewBox="0 0 18 18"><circle cx="9" cy="9" r="7.8" fill="#fff" stroke="#d5dbe1"/><path d="M6 8.5H11.6M8.8 5.7V11.3" stroke="#555" stroke-width="1"/></svg>
<div style="position:absolute;left:73px;top:722px;width:1px;height:49px;background:#e2e2e2"></div>
<div style="position:absolute;left:99px;top:732px;width:1px;height:15px;background:#e2e2e2"></div>
<div style="position:absolute;left:99px;top:746px;width:6px;height:1px;background:#e2e2e2"></div>
<svg style="left:117.7px;top:739.2px;" width="14" height="14" viewBox="0 0 14 14"><circle cx="7" cy="7" r="6.3" fill="#128a3e"/><path d="M4 7L6.2 9.2L10 5.2" stroke="#fff" stroke-width="2.1" fill="none"/></svg>
<svg style="left:67px;top:771px;" width="12" height="12" viewBox="0 0 12 12"><rect x="0.5" y="0.5" width="11" height="11" fill="#fff" stroke="#dadada"/><path d="M2.5 5.5H8.5" stroke="#555" stroke-width="1"/></svg>
<svg style="left:234px;top:768px;" width="18" height="18" viewBox="0 0 18 18"><circle cx="9" cy="9" r="7.8" fill="#fff" stroke="#d5dbe1"/><path d="M6 8.5H11.6M8.8 5.7V11.3" stroke="#555" stroke-width="1"/></svg>
<div style="position:absolute;left:99px;top:793px;width:1px;height:16px;background:#e2e2e2"></div>
<div style="position:absolute;left:99px;top:808px;width:6px;height:1px;background:#e2e2e2"></div>
<svg style="left:117.7px;top:800.8000000000001px;" width="14" height="14" viewBox="0 0 14 14"><circle cx="7" cy="7" r="6.3" fill="#128a3e"/><path d="M4 7L6.2 9.2L10 5.2" stroke="#fff" stroke-width="2.1" fill="none"/></svg>
<svg style="left:66px;top:831.6px;" width="14" height="14" viewBox="0 0 14 14"><circle cx="7" cy="7" r="4.85" fill="none" stroke="#e1283a" stroke-width="2.9"/></svg>
<svg style="left:234px;top:830px;" width="18" height="18" viewBox="0 0 18 18"><circle cx="9" cy="9" r="7.8" fill="#fff" stroke="#d5dbe1"/><path d="M6 8.5H11.6M8.8 5.7V11.3" stroke="#555" stroke-width="1"/></svg>
<div style="position:absolute;left:0px;top:872px;width:283px;height:93px;background:#fff;border-top:1px solid #e6e6e6;border-right:1px solid #e4e4e4;box-sizing:border-box;box-shadow:0 0 9px rgba(0,0,0,0.06)"></div>
<div style="position:absolute;left:0px;top:862px;width:283px;height:10px;background:#ebebeb"></div>
<svg style="left:119px;top:864px;" width="38" height="9" viewBox="0 0 38 9"><path d="M0 9Q3 9 5 4.5Q7 0.5 10.5 0.5H27.5Q31 0.5 33 4.5Q35 9 38 9Z" fill="#fff"/><path d="M10 4.5H27M10 6.5H27" stroke="#bdbdbd" stroke-width="0.9"/></svg>
<div class="t" style="left:11.3px;top:882.06px;font-size:16px;color:#333;font-weight:normal;transform:scaleX(1.0133);transform-origin:0 0;-webkit-text-stroke:0.5px #333;">Job status</div>
<div style="position:absolute;left:0px;top:909px;width:282px;height:1px;background:#e6e6e6"></div>
<svg style="left:12px;top:917px;" width="40" height="40" viewBox="0 0 40 40"><circle cx="20" cy="20.5" r="18.2" fill="none" stroke="#138a13" stroke-width="2.2"/><circle cx="20" cy="20.5" r="7" fill="#138a13"/><path d="M16.8 20.6L19.1 22.8L23.4 18.4" stroke="#fff" stroke-width="2" fill="none"/></svg>
<div class="t" style="left:59.4px;top:923.23px;font-size:13.2px;color:#333;font-weight:normal;transform:scaleX(1.0158);transform-origin:0 0;">X8_tentaiova_8_fechada_v1 - ...</div>
<div class="t" style="left:59.4px;top:942.29px;font-size:11px;color:#666;font-weight:normal;transform:scaleX(1.0035);transform-origin:0 0;">Geometry Operation</div>
<div style="position:absolute;left:290px;top:64px;width:385px;height:463px;background:#fff;border:1px solid #e4e4e4;box-sizing:border-box;box-shadow:0 0 9px rgba(0,0,0,0.06)"></div>
<div class="t" style="left:309.2px;top:79.61px;font-size:17px;color:#333;font-weight:normal;transform:scaleX(0.9752);transform-origin:0 0;-webkit-text-stroke:0.5px #333;">Region refinement 1</div>
<div style="position:absolute;left:592px;top:71px;width:35px;height:36px;background:#0a76a9;border-radius:4px"></div>
<svg style="left:592px;top:71px;" width="35" height="36" viewBox="0 0 35 36"><path d="M11 18.7L14.9 22L23.8 13.4" stroke="#fff" stroke-width="1.7" fill="none"/></svg>
<div style="position:absolute;left:631px;top:71px;width:36px;height:36px;background:#fff;border:1px solid #e2e2e2;border-radius:4px;box-sizing:border-box"></div>
<svg style="left:631px;top:71px;" width="36" height="36" viewBox="0 0 36 36"><path d="M13.7 13.9L22.1 21.8M22.1 13.9L13.7 21.8" stroke="#555" stroke-width="1.4" fill="none"/></svg>
<div style="position:absolute;left:291px;top:113px;width:383px;height:1px;background:#e6e6e6"></div>
<div class="t" style="left:305.0px;top:136.15px;font-size:14px;color:#333;font-weight:normal;transform:scaleX(0.9925);transform-origin:0 0;">Refinements</div>
<div class="t" style="left:517.4px;top:135.35px;font-size:14px;color:#333;font-weight:normal;transform:scaleX(1.0000);transform-origin:0 0;">Region refinement</div>
<svg style="left:651px;top:138px;" width="11" height="8" viewBox="0 0 11 8"><path d="M2 2L5.5 5.5L9 2" stroke="#666" stroke-width="1.1" fill="none"/></svg>
<div style="position:absolute;left:513px;top:159px;width:148px;height:1px;background:#dcdcdc"></div>
<div class="t" style="left:305.0px;top:175.85px;font-size:14px;color:#333;font-weight:normal;transform:scaleX(0.9954);transform-origin:0 0;">Refinement mode</div>
<div class="t" style="left:517.4px;top:175.35px;font-size:14px;color:#333;font-weight:normal;transform:scaleX(0.9904);transform-origin:0 0;">Inside</div>
<svg style="left:651px;top:178px;" width="11" height="8" viewBox="0 0 11 8"><path d="M2 2L5.5 5.5L9 2" stroke="#666" stroke-width="1.1" fill="none"/></svg>
<div style="position:absolute;left:513px;top:199px;width:148px;height:1px;background:#dcdcdc"></div>
<div class="t" style="left:305.0px;top:214.85px;font-size:14px;color:#333;font-weight:normal;transform:scaleX(0.9976);transform-origin:0 0;">Maximum edge length</div>
<div class="t" style="left:517.2px;top:214.75px;font-size:14px;color:#333;font-weight:normal;transform:scaleX(0.9909);transform-origin:0 0;">0.01</div>
<div class="t" style="left:636.7px;top:214.75px;font-size:14px;color:#333;font-weight:normal;transform:scaleX(0.9432);transform-origin:0 0;">m</div>
<svg style="left:651px;top:218px;" width="11" height="8" viewBox="0 0 11 8"><path d="M2 2L5.5 5.5L9 2" stroke="#666" stroke-width="1.1" fill="none"/></svg>
<div style="position:absolute;left:513px;top:238px;width:106px;height:1px;background:#dcdcdc"></div>
<div style="position:absolute;left:632px;top:238px;width:29px;height:1px;background:#dcdcdc"></div>
<div class="t" style="left:305.0px;top:258.65px;font-size:14px;color:#333;font-weight:normal;transform:scaleX(0.9931);transform-origin:0 0;-webkit-text-stroke:0.5px #333;">No entities have been assigned</div>
<div style="position:absolute;left:602px;top:256px;width:20px;height:9px;background:#e4f4fb;border:1px solid #e2e2e2;border-radius:5px;box-sizing:border-box"></div>
<div style="position:absolute;left:610px;top:252px;width:18px;height:18px;background:#27b1e0;border-radius:50%;box-shadow:0 1px 4px rgba(0,0,0,0.18)"></div>
<div style="position:absolute;left:291px;top:288px;width:383px;height:154px;background:#e0f4fa;border:1.5px solid #2aaee0;border-left:3px solid #2aaee0;box-sizing:border-box"></div>
<div class="t" style="left:443.0px;top:301.05px;font-size:14px;color:#444;font-weight:normal;transform:scaleX(0.9758);transform-origin:0 0;">Pick Volumes</div>
<div class="t" style="left:305.0px;top:449.15px;font-size:14px;color:#333;font-weight:normal;transform:scaleX(1.0284);transform-origin:0 0;">Geometry primitives</div>
<svg style="left:441px;top:447px;" width="18" height="18" viewBox="0 0 18 18"><circle cx="9" cy="9" r="7.8" fill="#fff" stroke="#d5dbe1"/><path d="M6 8.5H11.6M8.8 5.7V11.3" stroke="#555" stroke-width="1"/></svg>
<div style="position:absolute;left:305px;top:488px;width:20px;height:9px;background:#e4f4fb;border:1px solid #e2e2e2;border-radius:5px;box-sizing:border-box"></div>
<div style="position:absolute;left:313px;top:484px;width:18px;height:18px;background:#0b74a8;border-radius:50%;box-shadow:0 1px 4px rgba(0,0,0,0.2)"></div>
<div class="t" style="left:423.6px;top:485.85px;font-size:14px;color:#333;font-weight:normal;transform:scaleX(0.9811);transform-origin:0 0;">Cartesian box 1</div>
<div style="position:absolute;left:284px;top:509px;width:1px;height:16px;background:#cfd4da"></div>
<div style="position:absolute;left:287px;top:509px;width:1px;height:16px;background:#cfd4da"></div>
<div style="position:absolute;left:969px;top:64px;width:390px;height:49px;background:rgba(245,245,245,0.95)"></div>
<div style="position:absolute;left:1026px;top:67px;width:1px;height:36px;background:#ebebeb"></div>
<div style="position:absolute;left:1265px;top:67px;width:1px;height:36px;background:#ebebeb"></div>
<div style="position:absolute;left:1309px;top:67px;width:1px;height:36px;background:#ebebeb"></div>
<div style="position:absolute;left:1076px;top:64px;width:43px;height:43px;background:#fafafa;border:1px solid #c5e3f1;border-radius:5px;box-sizing:border-box"></div>
<svg style="left:0;top:0" width="1920" height="965"><polygon points="1000.5,77.3 1007.9,81.4 1007.9,89.4 1000.5,93.5 993.1,89.4 993.1,81.4" fill="#fafafa" stroke="#555" stroke-width="1"/><polyline points="993.1,81.4 1000.5,85.5 1007.9,81.4" fill="none" stroke="#555"/><line x1="1000.5" y1="85.5" x2="1000.5" y2="93.5" stroke="#555"/><path d="M1011 99H1014.5V95.5" stroke="#777" fill="none"/><polygon points="1048.5,77.2 1055.7,81.3 1048.5,85.4 1041.3,81.3" fill="#eeeeee" stroke="#777" stroke-width="0.8"/><polygon points="1041.3,81.3 1048.5,85.4 1048.5,92.8 1041.3,89.3" fill="#9a9a9a" stroke="#777" stroke-width="0.8"/><polygon points="1048.5,85.4 1055.7,81.3 1055.7,89.3 1048.5,92.8" fill="#cfcfcf" stroke="#777" stroke-width="0.8"/><path d="M1060 99H1063.5V95.5" stroke="#777" fill="none"/><polygon points="1096.8,77.3 1104.1,81.4 1096.8,85.5 1089.5,81.4" fill="#ade0f4" stroke="#111" stroke-width="1"/><polygon points="1089.5,81.4 1096.8,85.5 1096.8,93.8 1089.5,89.4" fill="#27aee0" stroke="#111" stroke-width="1"/><polygon points="1096.8,85.5 1104.1,81.4 1104.1,89.4 1096.8,93.8" fill="#70cbec" stroke="#111" stroke-width="1"/><circle cx="1096.8" cy="77.3" r="1.6" fill="#111"/><circle cx="1089.5" cy="81.4" r="1.6" fill="#111"/><circle cx="1104.1" cy="81.4" r="1.6" fill="#111"/><circle cx="1096.8" cy="85.5" r="1.6" fill="#111"/><circle cx="1089.5" cy="89.4" r="1.6" fill="#111"/><circle cx="1104.1" cy="89.4" r="1.6" fill="#111"/><circle cx="1096.8" cy="93.8" r="1.6" fill="#111"/><polygon points="1137.3,81.6 1143.9,85.7 1143.9,93.5 1137.3,89.6" fill="#a5dcf0"/><polygon points="1143.9,77.5 1150.5,81.6 1150.5,89.6 1143.9,93.5 1137.3,89.6 1137.3,81.6" fill="none" stroke="#888"/><polyline points="1137.3,81.6 1143.9,85.7 1150.5,81.6" fill="none" stroke="#888"/><line x1="1143.9" y1="85.7" x2="1143.9" y2="93.5" stroke="#888"/><circle cx="1143.9" cy="77.5" r="1.5" fill="#8a8a8a"/><circle cx="1137.3" cy="81.6" r="1.5" fill="#8a8a8a"/><circle cx="1150.5" cy="81.6" r="1.5" fill="#8a8a8a"/><circle cx="1143.9" cy="85.7" r="1.5" fill="#8a8a8a"/><circle cx="1137.3" cy="89.6" r="1.5" fill="#8a8a8a"/><circle cx="1150.5" cy="89.6" r="1.5" fill="#8a8a8a"/><circle cx="1143.9" cy="93.5" r="1.5" fill="#8a8a8a"/><polygon points="1191.7,77.5 1198.3,81.6 1198.3,89.6 1191.7,93.5 1185.1,89.6 1185.1,81.6" fill="none" stroke="#a8dcf0"/><polyline points="1185.1,81.6 1191.7,85.7 1198.3,81.6" fill="none" stroke="#a8dcf0"/><line x1="1191.7" y1="85.7" x2="1191.7" y2="93.5" stroke="#a8dcf0"/><circle cx="1191.7" cy="77.5" r="1.5" fill="#8a8a8a"/><circle cx="1185.1" cy="81.6" r="1.5" fill="#8a8a8a"/><circle cx="1198.3" cy="81.6" r="1.5" fill="#8a8a8a"/><circle cx="1191.7" cy="85.7" r="1.5" fill="#8a8a8a"/><circle cx="1185.1" cy="89.6" r="1.5" fill="#8a8a8a"/><circle cx="1198.3" cy="89.6" r="1.5" fill="#8a8a8a"/><circle cx="1191.7" cy="93.5" r="1.5" fill="#8a8a8a"/><polygon points="1238.8,77.5 1245.4,81.6 1245.4,89.6 1238.8,93.5 1232.2,89.6 1232.2,81.6" fill="none" stroke="#999"/><polyline points="1232.2,81.6 1238.8,85.7 1245.4,81.6" fill="none" stroke="#999"/><line x1="1238.8" y1="85.7" x2="1238.8" y2="93.5" stroke="#999"/><circle cx="1238.8" cy="77.5" r="1.5" fill="#a8dcf0"/><circle cx="1232.2" cy="81.6" r="1.5" fill="#a8dcf0"/><circle cx="1245.4" cy="81.6" r="1.5" fill="#a8dcf0"/><circle cx="1238.8" cy="85.7" r="1.5" fill="#a8dcf0"/><circle cx="1232.2" cy="89.6" r="1.5" fill="#a8dcf0"/><circle cx="1245.4" cy="89.6" r="1.5" fill="#a8dcf0"/><circle cx="1238.8" cy="93.5" r="1.5" fill="#a8dcf0"/><rect x="1279.5" y="79.6" width="13.6" height="9.2" fill="none" stroke="#111" stroke-width="1.3" stroke-dasharray="2.6 2"/><path d="M1290.2 86.3L1290.5 94.5L1292.4 92.6L1294 95.8L1295.3 95.1L1293.8 92L1296.5 91.8Z" fill="#111"/><g stroke="#aaa" fill="none" stroke-width="0.9"><path d="M1331 76.5L1338.5 80.5V89L1334 93L1326.5 89V80.5Z"/><path d="M1326.5 80.5L1334 84.5L1338.5 80.5M1334 84.5V93M1330 78.5L1330 91M1326.5 85L1334 89L1338.5 85"/></g></svg>
<div style="position:absolute;left:1656px;top:64px;width:264px;height:270px;background:#fff;border:1px solid #e2e2e2;border-right:none;box-sizing:border-box;box-shadow:0 0 9px rgba(0,0,0,0.06)"></div>
<div style="position:absolute;left:1650px;top:190px;width:1px;height:15px;background:#cfd4da"></div>
<div style="position:absolute;left:1653px;top:190px;width:1px;height:15px;background:#cfd4da"></div>
<svg style="left:1671px;top:81px;" width="11" height="7" viewBox="0 0 11 7"><path d="M0.7 0.7L5.5 5.6L10.3 0.7" stroke="#555" stroke-width="1.1" fill="none"/></svg>
<div class="t" style="left:1692.0px;top:78.05px;font-size:14px;color:#333;font-weight:normal;transform:scaleX(1.0494);transform-origin:0 0;-webkit-text-stroke:0.5px #333;">Geometry</div>
<div style="position:absolute;left:1677px;top:105px;width:1px;height:9px;background:#e2e2e2"></div>
<svg style="left:1671px;top:114px;" width="12" height="12" viewBox="0 0 12 12"><rect x="0.5" y="0.5" width="11" height="11" fill="#fff" stroke="#dadada"/><path d="M2.5 5.5H8.5" stroke="#555" stroke-width="1"/></svg>
<svg style="left:1696.5px;top:112px;transform:scale(0.97);transform-origin:0 0;" width="13" height="16" viewBox="0 0 13 16"><polygon points="4.1,1.9 7.6,0.3 11.75,2.1 8.2,3.8" fill="#e6e6e6"/>
<polygon points="4.1,1.9 8.2,3.8 8.2,8.6 4.1,6.7" fill="#9c9c9c"/>
<polygon points="8.2,3.8 11.75,2.1 11.75,11.5 4.3,15.6 4.3,11 8.2,9.2" fill="#cdcdcd"/>
<polygon points="0,9 3.5,7.4 8.2,9.2 4.3,11" fill="#e3e3e3"/>
<polygon points="0,9 4.3,11 4.3,15.6 0,13.75" fill="#a0a0a0"/></svg>
<div class="t" style="left:1718.8px;top:113.05px;font-size:14px;color:#333;font-weight:normal;transform:scaleX(0.9646);transform-origin:0 0;">X8_tentaiova_8_fechada_v1</div>
<div style="position:absolute;left:1703px;top:136px;width:1px;height:15px;background:#e2e2e2"></div>
<div style="position:absolute;left:1703px;top:151px;width:6px;height:1px;background:#e2e2e2"></div>
<svg style="left:1721.5px;top:144.6px" width="16" height="12" viewBox="0 0 16 12"><path d="M0.5 6Q8 -3.5 15.5 6Q8 15.5 0.5 6Z" fill="#8a8a8a"/><circle cx="8" cy="6" r="3" fill="#fff"/><circle cx="8" cy="6" r="1.8" fill="#fff"/><path d="M10.3 2.8L5.7 9.2" stroke="#8a8a8a" stroke-width="1.2"/></svg>
<svg style="left:1747px;top:142px;" width="17" height="18" viewBox="0 0 17 18"><polygon points="8.5,0.5 16,4.3 8.5,8.2 1,4.3" fill="#e9e9e9"/><polygon points="1,4.3 8.5,8.2 8.5,17.5 1,13.6" fill="#a3a3a3"/><polygon points="8.5,8.2 16,4.3 16,13.6 8.5,17.5" fill="#d0d0d0"/></svg>
<div class="t" style="left:1771.9px;top:143.75px;font-size:14px;color:#8a8a8a;font-weight:normal;transform:scaleX(1.0005);transform-origin:0 0;">Flow region</div>
<div style="position:absolute;left:1657px;top:175px;width:263px;height:1px;background:#e6e6e6"></div>
<svg style="left:1671px;top:191px;" width="11" height="7" viewBox="0 0 11 7"><path d="M0.7 0.7L5.5 5.6L10.3 0.7" stroke="#8a8a8a" stroke-width="1.1" fill="none"/></svg>
<div class="t" style="left:1692.3px;top:188.05px;font-size:14px;color:#9a9a9a;font-weight:normal;transform:scaleX(1.0230);transform-origin:0 0;-webkit-text-stroke:0.5px #9a9a9a;">Topological Entity Sets</div>
<div style="position:absolute;left:1677px;top:215px;width:1px;height:15px;background:#e2e2e2"></div>
<div style="position:absolute;left:1677px;top:230px;width:5px;height:1px;background:#e2e2e2"></div>
<svg style="left:1695.5px;top:223.7px" width="16" height="12" viewBox="0 0 16 12"><path d="M0.5 6Q8 -3.5 15.5 6Q8 15.5 0.5 6Z" fill="#cfcfcf"/><circle cx="8" cy="6" r="3" fill="#fff"/><circle cx="8" cy="6" r="1.8" fill="#fff"/><path d="M10.3 2.8L5.7 9.2" stroke="#cfcfcf" stroke-width="1.2"/></svg>
<svg style="left:1721px;top:221px;" width="18" height="19" viewBox="0 0 18 19"><polygon points="9,2 15.5,5 15.5,17 9,14" fill="#e3e3e3"/><polygon points="5,2.5 11,5.5 11,17.5 5,14.5" fill="#c8c8c8"/><polygon points="1,1 7,4 7,18 1,15" fill="#9c9c9c"/></svg>
<div class="t" style="left:1745.5px;top:222.55px;font-size:14px;color:#8d8d8d;font-weight:normal;transform:scaleX(0.9568);transform-origin:0 0;">Corpo asa</div>
<div style="position:absolute;left:1657px;top:254px;width:263px;height:1px;background:#e6e6e6"></div>
<svg style="left:1671px;top:270px;" width="11" height="7" viewBox="0 0 11 7"><path d="M0.7 0.7L5.5 5.6L10.3 0.7" stroke="#555" stroke-width="1.1" fill="none"/></svg>
<div class="t" style="left:1692.3px;top:266.35px;font-size:14px;color:#333;font-weight:normal;transform:scaleX(1.0549);transform-origin:0 0;-webkit-text-stroke:0.5px #333;">Geometry primitives</div>
<svg style="left:1889px;top:265px;" width="18" height="18" viewBox="0 0 18 18"><circle cx="9" cy="9" r="7.8" fill="#fff" stroke="#d5dbe1"/><path d="M6 8.5H11.6M8.8 5.7V11.3" stroke="#555" stroke-width="1"/></svg>
<div style="position:absolute;left:1677px;top:295px;width:1px;height:14px;background:#e2e2e2"></div>
<div style="position:absolute;left:1677px;top:309px;width:5px;height:1px;background:#e2e2e2"></div>
<svg style="left:1695.5px;top:302.7px" width="16" height="12" viewBox="0 0 16 12"><path d="M0.5 6Q8 -3.5 15.5 6Q8 15.5 0.5 6Z" fill="#8a8a8a"/><circle cx="8" cy="6" r="3" fill="#fff"/><circle cx="8" cy="6" r="1.9" fill="#8a8a8a"/></svg>
<svg style="left:1721px;top:301px;" width="18" height="15" viewBox="0 0 18 15"><polygon points="0.5,4 4,0.5 17.5,0.5 14,4" fill="#e2e2e2"/><polygon points="0.5,4 14,4 14,14.5 0.5,14.5" fill="#a3a3a3"/><polygon points="14,4 17.5,0.5 17.5,11 14,14.5" fill="#cacaca"/></svg>
<div class="t" style="left:1745.5px;top:301.45px;font-size:14px;color:#333;font-weight:normal;transform:scaleX(0.9739);transform-origin:0 0;">Cartesian box 1</div>
<svg style="left:0;top:0" width="1920" height="965"><g fill="none" stroke="#cfcfcf" stroke-width="1.4"><polygon points="1809.9,798.3 1821,787.2 1832.1,798.3"/><polygon points="1809.9,943.3 1832.1,943.3 1821,954.2"/><polygon points="1748.3,859.9 1748.3,882.1 1737.8,871"/><polygon points="1893.7,859.9 1893.7,882.1 1904.2,871"/></g><polygon points="1823.0,810.0 1869.1,851.8 1815.0,889.2 1769.5,848.4" fill="#f9f9f9"/><polygon points="1769.5,848.4 1815.0,889.2 1818.6,931.6 1772.5,888.2" fill="#f8f8f8"/><polygon points="1815.0,889.2 1869.1,851.8 1871.9,892.2 1818.6,931.6" fill="#f8f8f8"/><g fill="none" stroke="#9a9a9a" stroke-width="1.5" stroke-linejoin="round"><polygon points="1823.0,810.0 1869.1,851.8 1871.9,892.2 1818.6,931.6 1772.5,888.2 1769.5,848.4"/><polyline points="1769.5,848.4 1815.0,889.2 1869.1,851.8"/><line x1="1815" y1="889.2" x2="1818.6" y2="931.6"/></g><text x="0" y="0" font-family="Liberation Sans" font-size="9" fill="#999" transform="translate(1821,849) rotate(-140) scale(1,0.85)" text-anchor="middle">LEFT</text><text x="0" y="0" font-family="Liberation Sans" font-size="8" fill="#aaa" transform="translate(1797,891) rotate(42) skewX(-8)" text-anchor="middle">BOTTOM</text><text x="0" y="0" font-family="Liberation Sans" font-size="9" fill="#999" font-style="italic" transform="translate(1846,896) rotate(-33)" text-anchor="middle">FRONT</text><line x1="1818.6" y1="931.6" x2="1768" y2="885.5" stroke="#f59a9a" stroke-width="1.6"/><polygon points="1765,882.5 1772.5,884.5 1768.5,888.5" fill="#f59a9a"/><line x1="1818.6" y1="931.6" x2="1815.5" y2="886" stroke="#9ee38e" stroke-width="1.6"/><polygon points="1815.3,882 1817.8,889 1813.2,889" fill="#9ee38e"/><line x1="1818.6" y1="931.6" x2="1879" y2="888" stroke="#a3a6f7" stroke-width="1.6"/><polygon points="1882,885.5 1878.5,892 1875.5,887.5" fill="#a3a6f7"/><text x="1754.5" y="881.5" font-family="Liberation Sans" font-size="12" fill="#f59a9a">X</text><text x="1811" y="881.5" font-family="Liberation Sans" font-size="12" fill="#9ee38e">Y</text><text x="1884" y="886" font-family="Liberation Sans" font-size="12" fill="#a3a6f7">Z</text><path d="M1744 906L1735 914.5H1740Q1740 932 1751 941L1755 937Q1746 930 1746.3 914.5H1752Z" fill="none" stroke="#d2d2d2" stroke-width="1.3" stroke-linejoin="round"/><path d="M1752 943Q1762 948 1778 948V953L1786 948L1778 940.5V944.8Q1764 944.5 1755 939Z" fill="none" stroke="#d2d2d2" stroke-width="1.3" stroke-linejoin="round"/><path d="M1889 931.5L1878.7 941.5H1882V950H1886.5V944.5H1891.5V950H1896V941.5H1899.3Z" fill="none" stroke="#d2d2d2" stroke-width="1.3" stroke-linejoin="round"/></svg>
<svg style="left:972px;top:937px;" width="272" height="11" viewBox="0 0 272 11"><path d="M1.5 1.5V8H269.5V1.5" fill="none" stroke="#333" stroke-width="2.2"/></svg>
<div class="t" style="left:1092.8px;top:950.80px;font-size:13px;color:#444;font-weight:normal;transform:scaleX(1.0002);transform-origin:0 0;">2 [m]</div>
</body></html>
